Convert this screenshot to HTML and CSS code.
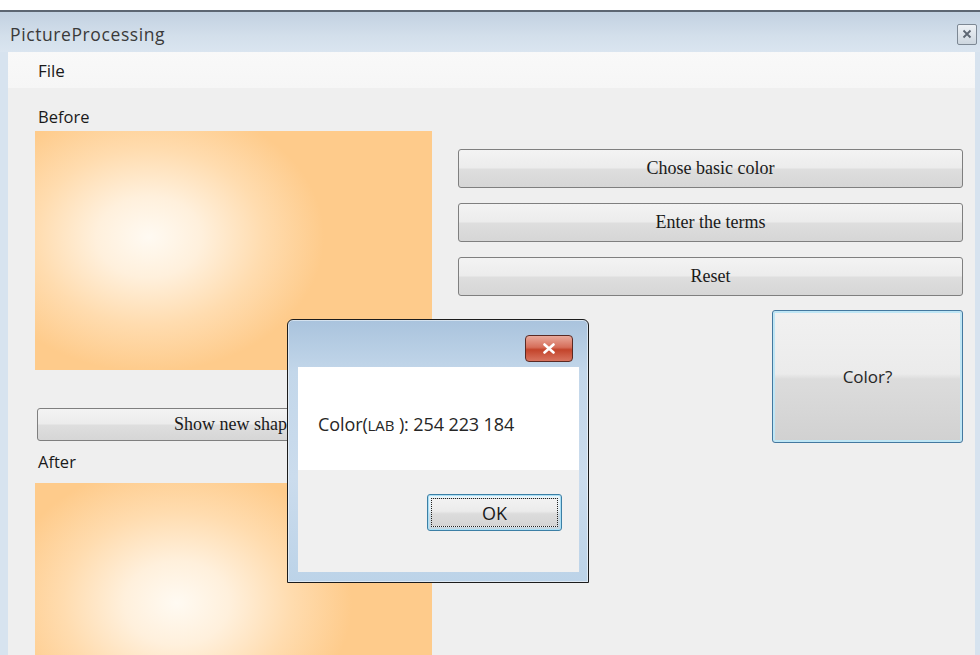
FILE: index.html
```html
<!DOCTYPE html>
<html>
<head>
<meta charset="utf-8">
<title>PictureProcessing</title>
<link rel="stylesheet" href="styles.css">
</head>
<body>
<div class="window">
  <div class="titlebar">
    <span class="title">PictureProcessing</span>
    <span class="tb-close">
      <svg width="10" height="10" viewBox="0 0 10 10"><path d="M1.5 1.5 L8.5 8.5 M8.5 1.5 L1.5 8.5" stroke="#5d6672" stroke-width="1.8" fill="none"/></svg>
    </span>
  </div>
  <div class="frame">
    <div class="menubar"><span class="menu-item">File</span></div>
    <div class="client">
      <div class="left-col">
        <div class="label">Before</div>
        <div class="picture picture-before"></div>
        <button class="btn btn-serif btn-shape">Show new shape</button>
        <div class="label">After</div>
        <div class="picture picture-after"></div>
      </div>
      <div class="right-col">
        <button class="btn btn-serif">Chose basic color</button>
        <button class="btn btn-serif">Enter the terms</button>
        <button class="btn btn-serif">Reset</button>
        <button class="btn btn-color">Color?</button>
      </div>
    </div>
  </div>
</div>

<div class="dialog">
  <div class="dlg-title">
    <span class="dlg-close">
      <svg width="14" height="11" viewBox="0 0 14 11"><path d="M2.5 1.5 L11.5 9.5 M11.5 1.5 L2.5 9.5" stroke="#ffffff" stroke-width="2.6" stroke-linecap="round" fill="none"/></svg>
    </span>
  </div>
  <div class="dlg-body">
    <div class="dlg-message">Color(<span class="small-caps">LAB</span> ): 254 223 184</div>
    <div class="dlg-footer">
      <button class="btn-ok"><span class="ok-focus">OK</span></button>
    </div>
  </div>
</div>
</body>
</html>
```

FILE: styles.css
```css
html, body {
  margin: 0;
  padding: 0;
  background: #ffffff;
  width: 980px;
  height: 655px;
  overflow: hidden;
}

body {
  font-family: "Open Sans", "Noto Sans", sans-serif;
  color: #222;
}

.window {
  margin-top: 10px;
  border-top: 2px solid #5c6672;
  background: #d7e3ef;
  height: 643px;
  display: flex;
  flex-direction: column;
}

.titlebar {
  height: 40px;
  flex: none;
  display: flex;
  align-items: center;
  justify-content: space-between;
  padding: 0 3px 0 10px;
  background: linear-gradient(#c2d1e1, #d3dfeb 60%, #dae5f0);
}

.title {
  font-size: 17.5px;
  color: #3a3a3a;
  letter-spacing: 0.6px;
  margin-top: 4px;
}

.tb-close {
  width: 18px;
  height: 19px;
  border: 1px solid #7d8894;
  border-radius: 2px;
  background: linear-gradient(#eef2f6, #cdd6df);
  display: flex;
  align-items: center;
  justify-content: center;
  margin-top: 4px;
}

.frame {
  flex: 1;
  display: flex;
  flex-direction: column;
  padding: 0 5px 0 8px;
  min-height: 0;
}

.menubar {
  height: 36px;
  flex: none;
  background: linear-gradient(#f9f9f9, #f6f6f6);
  display: flex;
  align-items: center;
  padding-left: 30px;
}

.menu-item {
  font-size: 17px;
  color: #1a1a1a;
}

.client {
  flex: 1;
  background: #efefef;
  display: flex;
  gap: 26px;
  padding: 19px 0 0 27px;
  min-height: 0;
  overflow: hidden;
}

.left-col {
  width: 397px;
  display: flex;
  flex-direction: column;
}

.label {
  flex: none;
  font-size: 16.5px;
  line-height: 20px;
  height: 20px;
  color: #1a1a1a;
  padding-left: 3px;
  margin-bottom: 4px;
}

.picture {
  width: 397px;
  flex: none;
  background-color: #fecb8b;
}

.picture-before {
  height: 239px;
  background-image: radial-gradient(ellipse 175px 135px at 114px 106px, #fffaf2 0%, #fff0dc 30%, #ffdcaf 65%, #fecb8b 100%);
}

.picture-after {
  height: 200px;
  margin-top: 7px;
  background-image: radial-gradient(ellipse 175px 140px at 142px 120px, #fffaf2 0%, #fff0dc 30%, #ffdcaf 65%, #fecb8b 100%);
}

.btn {
  display: block;
  flex: none;
  border: 1px solid #7f7f7f;
  border-radius: 3px;
  background: linear-gradient(#f3f3f3 0%, #ececec 48%, #dedede 52%, #d6d6d6 100%);
  color: #1a1a1a;
  padding: 0;
  margin: 0;
}

.btn-serif {
  font-family: "Liberation Serif", "Times New Roman", serif;
  font-size: 18px;
}

.btn-shape {
  width: 395px;
  height: 33px;
  margin: 38px 0 11px 2px;
}

.right-col {
  width: 505px;
  display: flex;
  flex-direction: column;
  align-items: flex-end;
  padding-top: 42px;
}

.right-col .btn-serif {
  width: 505px;
  height: 39px;
  margin-bottom: 15px;
}

.btn-color {
  width: 191px;
  height: 133px;
  margin-top: -1px;
  border: 1px solid #44789f;
  border-radius: 3px;
  box-shadow: inset 0 0 0 2px #bfe6f5;
  background: linear-gradient(#f1f1f1 0%, #ebebeb 48%, #dcdcdc 52%, #d1d1d1 100%);
  font-family: "Open Sans", "Noto Sans", sans-serif;
  font-size: 17px;
  color: #262626;
}

/* message box */
.dialog {
  position: absolute;
  left: 287px;
  top: 319px;
  width: 300px;
  height: 262px;
  border: 1px solid #1c1c1c;
  border-radius: 6px 6px 0 0;
  background: linear-gradient(#a9c3dd 0%, #c3d7ea 20%, #cbdced 60%, #bcd3e8 100%);
  display: flex;
  flex-direction: column;
  box-shadow: inset 0 0 0 1px rgba(255,255,255,0.5);
}

.dlg-title {
  height: 47px;
  flex: none;
  display: flex;
  justify-content: flex-end;
  align-items: flex-start;
  padding-right: 15px;
}

.dlg-close {
  margin-top: 15px;
  width: 46px;
  height: 25px;
  border: 1px solid #5a2a24;
  border-radius: 4px;
  background: linear-gradient(#e9a99b 0%, #d66e5a 45%, #c3442b 55%, #d8745f 100%);
  display: flex;
  align-items: center;
  justify-content: center;
}

.dlg-body {
  flex: 1;
  margin: 0 9px 10px 10px;
  display: flex;
  flex-direction: column;
  background: #f0f0f0;
}

.dlg-message {
  height: 103px;
  background: #ffffff;
  font-size: 18px;
  color: #262626;
  padding: 45px 0 0 20px;
  box-sizing: border-box;
  letter-spacing: -0.1px;
}

.small-caps {
  font-size: 15px;
}

.dlg-footer {
  flex: 1;
  display: flex;
  justify-content: flex-end;
  align-items: flex-start;
  padding: 24px 17px 0 0;
}

.btn-ok {
  width: 135px;
  height: 37px;
  border: 1px solid #3c7fa5;
  border-radius: 3px;
  background: linear-gradient(#eaf6fb 0%, #e4eff5 45%, #cfdde6 55%, #c6d6e0 100%);
  box-shadow: inset 0 0 0 1px #a9dff5;
  padding: 3px;
  margin: 0;
  font-family: "Open Sans", "Noto Sans", sans-serif;
  font-size: 18px;
  color: #1a1a1a;
}

.ok-focus {
  display: flex;
  align-items: center;
  justify-content: center;
  height: 100%;
  border: 1px dotted #222;
  box-sizing: border-box;
  background: linear-gradient(#f2f2f2 0%, #ebebeb 45%, #dcdcdc 55%, #d4d4d4 100%);
}
```
